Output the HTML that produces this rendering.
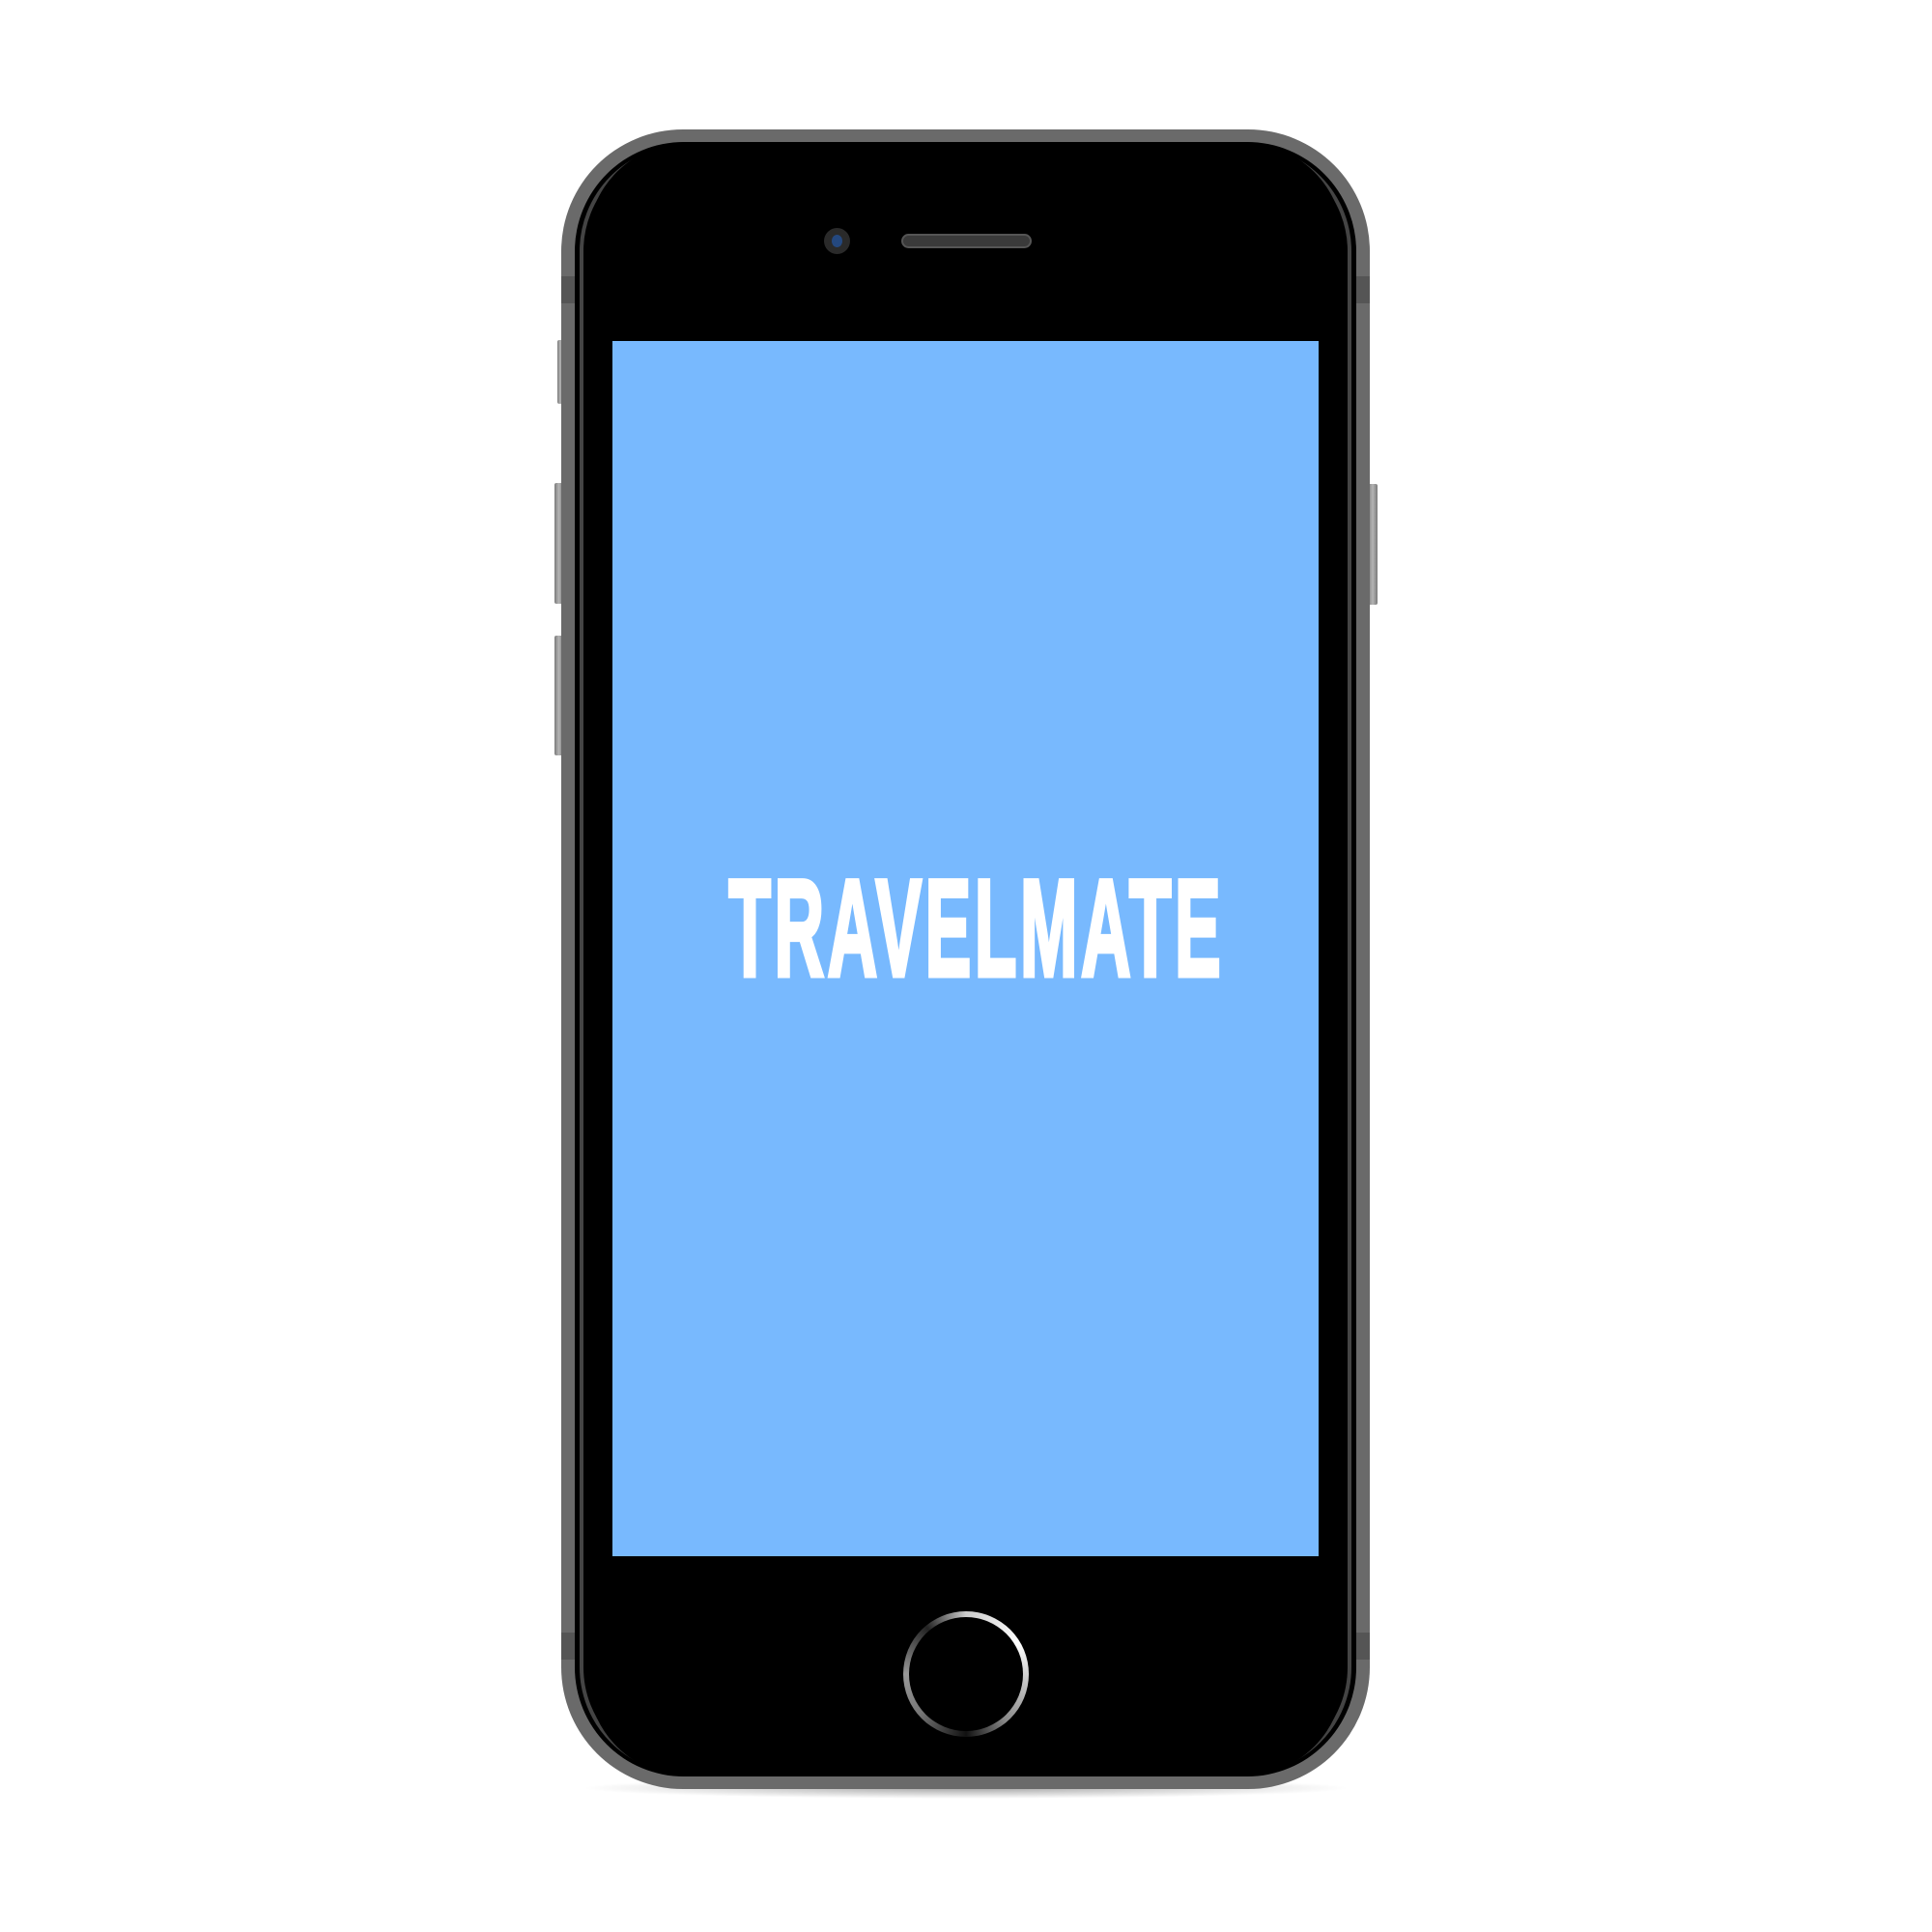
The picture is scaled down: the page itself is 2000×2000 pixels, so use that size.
<!DOCTYPE html>
<html><head><style>
html,body{margin:0;padding:0;background:#fff;width:2000px;height:2000px;overflow:hidden;position:relative}
.abs{position:absolute}
.shadow{left:600px;top:1840px;width:800px;height:22px;border-radius:50%;background:radial-gradient(ellipse at center,rgba(0,0,0,0.35),rgba(0,0,0,0) 70%)}
.btn{background:linear-gradient(90deg,#7a7a7a,#b5b5b5,#7a7a7a);border-radius:2px}
.phone{left:581px;top:134px;width:837px;height:1718px;border-radius:126px;background:#6a6a6a}
.inner1{left:595px;top:147px;width:809px;height:1692px;border-radius:113px;background:#000}
.inner2{left:600px;top:150px;width:799px;height:1686px;border-radius:110px;border:4px solid #444;box-sizing:border-box;background:#000}
.inner3{left:608px;top:147px;width:783px;height:1692px;border-radius:105px;background:#000}
.screen{left:634px;top:353px;width:731px;height:1258px;background:#78b9fe}
.title{left:409px;top:890px;width:1200px;text-align:center;font-family:"Liberation Sans",sans-serif;font-weight:bold;font-size:143px;line-height:144px;color:#fff;-webkit-text-stroke:5px #fff;transform:scaleX(0.5);transform-origin:center;white-space:nowrap;letter-spacing:7px;text-indent:7px}
.cam{left:853px;top:236px;width:27px;height:27px;border-radius:50%;background:#2a2a2a}
.cam i{position:absolute;left:8px;top:7px;width:11px;height:13px;border-radius:50%;background:#24487f}
.spk{left:933px;top:242px;width:135px;height:15px;border-radius:8px;background:#3a3a3a;border:2px solid #555;box-sizing:border-box}
.home{left:935px;top:1668px;width:130px;height:130px;border-radius:50%;background:conic-gradient(from 0deg,#ccc,#fff 60deg,#888 140deg,#111 180deg,#777 230deg,#999 270deg,#222 320deg,#ccc);}
.home i{position:absolute;left:6px;top:6px;width:118px;height:118px;border-radius:50%;background:#000}
</style></head><body>
<div class="abs shadow"></div>
<div class="abs btn" style="left:577px;top:352px;width:6px;height:66px"></div>
<div class="abs btn" style="left:574px;top:500px;width:9px;height:125px"></div>
<div class="abs btn" style="left:574px;top:658px;width:9px;height:124px"></div>
<div class="abs btn" style="left:1416px;top:501px;width:10px;height:125px"></div>
<div class="abs phone"></div>
<div class="abs" style="left:581px;top:286px;width:14px;height:28px;background:#555"></div>
<div class="abs" style="left:1404px;top:286px;width:14px;height:28px;background:#555"></div>
<div class="abs" style="left:581px;top:1690px;width:14px;height:28px;background:#555"></div>
<div class="abs" style="left:1404px;top:1690px;width:14px;height:28px;background:#555"></div>
<div class="abs inner1"></div>
<div class="abs inner2"></div>
<div class="abs inner3"></div>
<div class="abs cam"><i></i></div>
<div class="abs spk"></div>
<div class="abs screen"></div>
<div class="abs title">TRAVELMATE</div>
<div class="abs home"><i></i></div>
</body></html>
